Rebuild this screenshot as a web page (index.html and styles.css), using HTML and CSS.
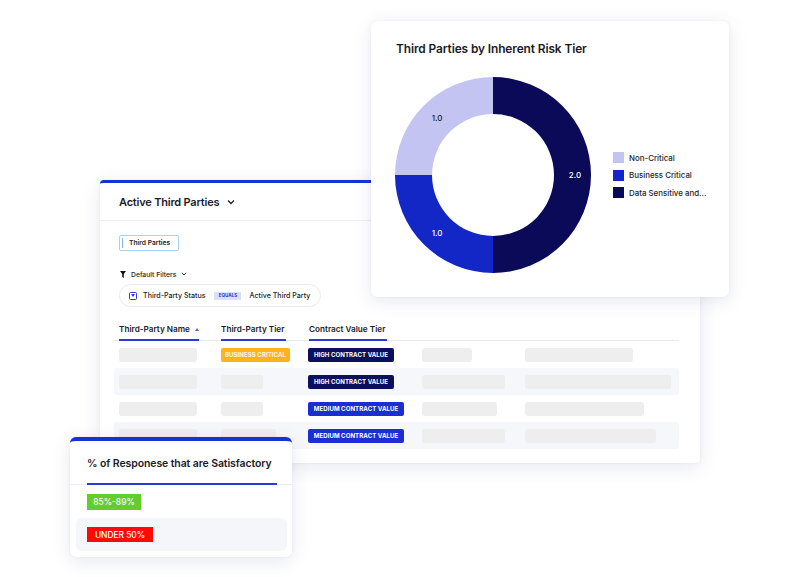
FILE: index.html
```html
<!DOCTYPE html>
<html>
<head>
<meta charset="utf-8">
<link rel="stylesheet" href="styles.css">
</head>
<body>
<div class="canvas">

  <section class="card table-card">
    <header class="tc-head">
      <span class="tc-title">Active Third Parties</span>
      <svg class="chev" width="8" height="6" viewBox="0 0 8 6"><path d="M1 1.5 L4 4.5 L7 1.5" fill="none" stroke="#222" stroke-width="1.3"/></svg>
    </header>
    <div class="tc-body">
      <div class="chip"><span class="caret"></span>Third Parties</div>
      <div class="filters">
        <svg width="6" height="7" viewBox="0 0 6 7"><path d="M0 0 H6 L3.8 3 V7 L2.2 6 V3 Z" fill="#111"/></svg>
        <span class="filters-label">Default Filters</span>
        <svg class="chev-s" width="6" height="4" viewBox="0 0 6 4"><path d="M0.8 0.8 L3 3 L5.2 0.8" fill="none" stroke="#333" stroke-width="1"/></svg>
      </div>
      <div class="pill">
        <span class="pill-icon"><svg width="4" height="3" viewBox="0 0 4 3"><path d="M0 0 H4 L2 3 Z" fill="#2b3bd0"/></svg></span>
        <span class="pill-field">Third-Party Status</span>
        <span class="equals">EQUALS</span>
        <span class="pill-value">Active Third Party</span>
      </div>
      <div class="grid">
        <div class="row head">
          <div><span class="th w1">Third-Party Name <i class="sort"></i></span></div>
          <div><span class="th w2">Third-Party Tier</span></div>
          <div><span class="th w3">Contract Value Tier</span></div>
          <div></div><div></div>
        </div>
        <div class="row">
          <div><span class="ph" style="width:78px"></span></div>
          <div><span class="badge orange">BUSINESS CRITICAL</span></div>
          <div><span class="badge navy">HIGH CONTRACT VALUE</span></div>
          <div><span class="ph" style="width:50px"></span></div>
          <div><span class="ph" style="width:108px"></span></div>
        </div>
        <div class="row striped">
          <div><span class="ph" style="width:78px"></span></div>
          <div><span class="ph" style="width:42px"></span></div>
          <div><span class="badge navy">HIGH CONTRACT VALUE</span></div>
          <div><span class="ph" style="width:83px"></span></div>
          <div><span class="ph" style="width:146px"></span></div>
        </div>
        <div class="row">
          <div><span class="ph" style="width:78px"></span></div>
          <div><span class="ph" style="width:42px"></span></div>
          <div><span class="badge blue">MEDIUM CONTRACT VALUE</span></div>
          <div><span class="ph" style="width:75px"></span></div>
          <div><span class="ph" style="width:119px"></span></div>
        </div>
        <div class="row striped">
          <div><span class="ph" style="width:78px"></span></div>
          <div><span class="ph" style="width:55px"></span></div>
          <div><span class="badge blue">MEDIUM CONTRACT VALUE</span></div>
          <div><span class="ph" style="width:83px"></span></div>
          <div><span class="ph" style="width:131px"></span></div>
        </div>
      </div>
    </div>
  </section>

  <section class="card chart-card">
    <h2 class="cc-title">Third Parties by Inherent Risk Tier</h2>
    <div class="cc-body">
      <svg class="donut" width="200" height="200" viewBox="0 0 200 200">
        <path d="M100 2 A98 98 0 0 0 2 100 L39 100 A61 61 0 0 1 100 39 Z" fill="#c4c4f3"/>
        <path d="M2 100 A98 98 0 0 0 100 198 L100 161 A61 61 0 0 1 39 100 Z" fill="#1326c6"/>
        <path d="M100 2 A98 98 0 0 1 100 198 L100 161 A61 61 0 0 0 100 39 Z" fill="#0a0a58"/>
        <text x="44" y="46" class="lbl dark">1.0</text>
        <text x="182" y="103" class="lbl">2.0</text>
        <text x="44" y="161" class="lbl">1.0</text>
      </svg>
      <ul class="legend">
        <li><span class="sw" style="background:#c4c4f3"></span>Non-Critical</li>
        <li><span class="sw" style="background:#1326c6"></span>Business Critical</li>
        <li><span class="sw" style="background:#0a0a58"></span>Data Sensitive and...</li>
      </ul>
    </div>
  </section>

  <section class="card sat-card">
    <div class="sc-head"><span class="sc-title">% of Responese that are Satisfactory</span></div>
    <div class="sc-row first"><span class="sbadge green">85%-89%</span></div>
    <div class="sc-row striped"><span class="sbadge red">UNDER 50%</span></div>
  </section>

</div>
</body>
</html>
```

FILE: styles.css
```css
* { box-sizing: border-box; margin: 0; padding: 0; }
html, body { width: 800px; height: 577px; background: #ffffff; overflow: hidden; }
body { font-family: Inter, "Noto Sans", "Liberation Sans", sans-serif; color: #1c1c28; }

.canvas { position: relative; width: 800px; height: 577px; }

.card {
  position: absolute;
  background: #ffffff;
  border-radius: 6px;
  box-shadow: 0 0 2px rgba(70, 80, 130, 0.10), 0 4px 18px rgba(70, 80, 140, 0.13);
}

/* ---------- table card ---------- */
.table-card {
  left: 100px; top: 180px; width: 600px; height: 283px;
  border-top: 3px solid #1631d6;
  border-radius: 4px;
}
.tc-head {
  height: 38px;
  display: flex; align-items: center; gap: 8px;
  padding-left: 19px;
  border-bottom: 1px solid #eeeff3;
}
.tc-title { font-size: 11px; font-weight: 600; letter-spacing: -0.2px; }
.chev { margin-top: 1px; }

.tc-body { padding-top: 14px; }
.chip {
  margin-left: 19px;
  width: 60px; height: 16px;
  border: 1px solid #a8d2f4;
  border-radius: 2px;
  display: flex; align-items: center;
  font-size: 6.7px; font-weight: 600;
  color: #1c1c28;
}
.chip .caret { width: 1px; height: 10px; background: #7cb8ec; margin: 0 6px 0 2px; }

.filters {
  margin: 16px 0 0 20px;
  height: 14px;
  display: flex; align-items: center;
}
.filters-label { font-size: 6.8px; font-weight: 500; margin-left: 5px; color: #222; }
.chev-s { margin-left: 5px; }

.pill {
  margin: 3px 0 0 19px;
  width: 202px; height: 23px;
  border: 1px solid #e9eaee;
  border-radius: 12px;
  display: flex; align-items: center;
  padding-left: 9px;
  font-size: 7.1px; font-weight: 500;
}
.pill-icon {
  width: 8px; height: 8px;
  border: 1px solid #2b3bd0; border-radius: 1.5px;
  display: flex; align-items: center; justify-content: center;
}
.pill-field { margin-left: 6px; }
.equals {
  margin-left: 9px;
  background: #dcdff8; color: #2b3bd0;
  font-size: 4.6px; font-weight: 700;
  height: 8px; width: 27px;
  display: flex; align-items: center; justify-content: center;
}
.pill-value { margin-left: 8px; }

.grid { margin: 12px 0 0 14px; width: 565px; }
.row {
  display: grid;
  grid-template-columns: 102px 87px 114px 103px 1fr;
  padding-left: 5px;
  height: 27px;
  align-items: center;
}
.row.head { height: 22px; align-items: end; border-bottom: 1px solid #e8e9ee; }
.row.striped { background: #f6f7fa; border-radius: 3px; }
.th {
  display: flex; align-items: center;
  font-size: 8.2px; font-weight: 600;
  padding-bottom: 5px;
  border-bottom: 2px solid #2a3bd4;
  margin-bottom: -1px;
  white-space: nowrap;
}
.w1 { width: 80px; }
.w2 { width: 65px; }
.w3 { width: 78px; margin-left: 1px; }
.sort {
  display: inline-block; margin-left: 5px;
  width: 0; height: 0;
  border-left: 2px solid transparent; border-right: 2px solid transparent;
  border-bottom: 3px solid #4a66e8;
}

.ph { display: block; height: 14px; border-radius: 3px; background: #eeeeef; }

.badge {
  display: flex; align-items: center; justify-content: center;
  height: 14px; border-radius: 2px;
  color: #ffffff; font-size: 6.1px; font-weight: 700; letter-spacing: 0.05px;
  white-space: nowrap;
}
.badge.orange { background: #ffb21e; width: 69px; color: #fff6e0; }
.badge.navy { background: #0c0e5e; width: 86px; }
.badge.blue { background: #1a2ed2; width: 96px; }

/* ---------- chart card ---------- */
.chart-card { left: 371px; top: 21px; width: 358px; height: 276px; }
.cc-title {
  padding: 19px 0 0 25px;
  font-size: 11.9px; font-weight: 600; line-height: 18px;
  color: #1a1a26;
  letter-spacing: -0.1px;
}
.cc-body {
  margin-top: 17px;
  padding-left: 22px;
  display: flex; align-items: center;
}
.donut { display: block; }
.lbl { font-family: Inter, "Noto Sans", sans-serif; font-size: 8px; font-weight: 500; fill: #ffffff; text-anchor: middle; }
.lbl.dark { fill: #1a1a2e; }
.legend { list-style: none; margin-left: 20px; display: flex; flex-direction: column; gap: 6.5px; }
.legend li { display: flex; align-items: center; font-size: 7.9px; font-weight: 500; color: #1e1e2a; height: 11px; white-space: nowrap; }
.sw { width: 11px; height: 11px; margin-right: 5px; flex: none; }

/* ---------- satisfactory card ---------- */
.sat-card {
  left: 70px; top: 437px; width: 222px; height: 120px;
  border-top: 4px solid #1631d6;
}
.sc-head { border-bottom: 1px solid #ecedf1; padding: 0 15px 0 17px; height: 44px; display: flex; align-items: flex-end; }
.sc-title {
  display: block; width: 190px;
  font-size: 10.5px; font-weight: 600;
  padding-bottom: 13px;
  border-bottom: 2px solid #2a3bd4;
  margin-bottom: -1px;
  white-space: nowrap;
  letter-spacing: -0.1px;
}
.sc-row { display: flex; align-items: center; padding-left: 17px; }
.sc-row.first { margin-top: 9px; height: 16px; }
.sc-row.striped { margin: 8px 5px 0 6px; height: 33px; padding-left: 11px; border-radius: 6px; background: #f5f6f9; }
.sbadge { height: 16px; display: flex; align-items: center; justify-content: center; color: #fff; font-size: 8.4px; font-weight: 500; }
.sbadge.green { background: #62cd2b; width: 54px; }
.sbadge.red { background: #ff0808; width: 66px; height: 15px; }
```
